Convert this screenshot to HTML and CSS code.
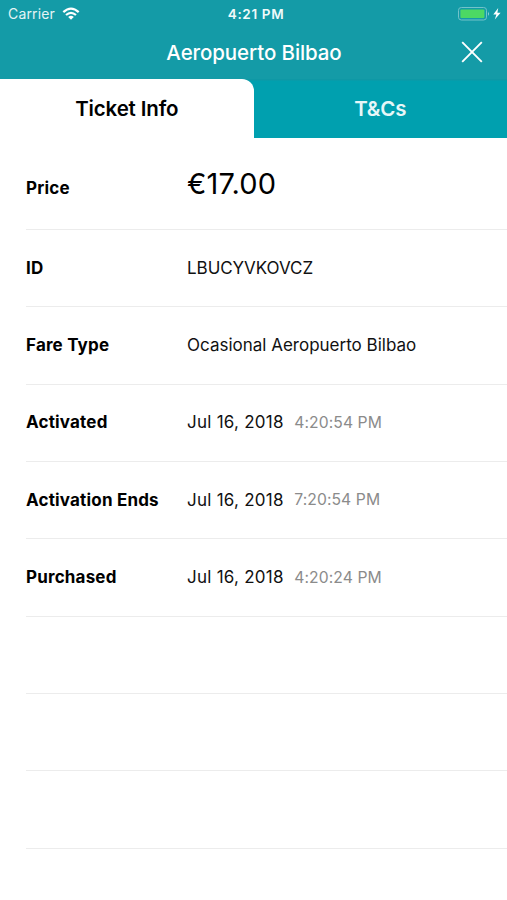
FILE: index.html
```html
<!DOCTYPE html>
<html lang="en">
<head>
<meta charset="utf-8">
<title>Aeropuerto Bilbao</title>
<link rel="stylesheet" href="styles.css">
</head>
<body>
<header class="header">
  <div class="status">
    <div class="carrier"><span>Carrier</span>
      <svg class="wifi" width="18" height="14" viewBox="0 0 18 14"><g fill="none" stroke="#fff" stroke-width="2.2"><path d="M1.3 5.1Q9-1.9 16.7 5.1"/><path d="M4 8Q9 3.6 14 8"/></g><path d="M6.2 10.1Q9 7.6 11.8 10.1L9 12.8Z" fill="#fff"/></svg>
    </div>
    <span class="time">4:21 PM</span>
    <svg class="battery" width="44" height="16" viewBox="0 0 44 16"><rect x=".5" y="1.5" width="28" height="12.5" rx="2.8" fill="none" stroke="#72c3ca"/><rect x="2.4" y="3.4" width="24" height="8.7" rx="1" fill="#4cd964"/><path d="M30 5.5q1.8 2.2 0 4.5z" fill="#a5d8dd"/><path d="M40.2 2L35.3 8.5h3.1L36.8 13.5 42.6 6.8h-3.2z" fill="#fff"/></svg>
  </div>
  <div class="nav">
    <h1 class="title">Aeropuerto Bilbao</h1>
    <svg class="close" width="22" height="22" viewBox="0 0 22 22"><path d="M1.2 1.2l19.6 19.6M20.8 1.2L1.2 20.8" stroke="#fff" stroke-width="1.9"/></svg>
  </div>
</header>
<nav class="tabs"><div class="tab active">Ticket Info</div><div class="tab">T&amp;Cs</div></nav>
<main class="rows">
  <div class="row first"><span class="label">Price</span><span class="price">€17.00</span></div>
  <div class="row"><span class="label">ID</span><span class="value code">LBUCYVKOVCZ</span></div>
  <div class="row"><span class="label">Fare Type</span><span class="value">Ocasional Aeropuerto Bilbao</span></div>
  <div class="row"><span class="label">Activated</span><span class="value date">Jul 16, 2018</span><span class="clock">4:20:54 PM</span></div>
  <div class="row"><span class="label">Activation Ends</span><span class="value date">Jul 16, 2018</span><span class="clock">7:20:54 PM</span></div>
  <div class="row"><span class="label">Purchased</span><span class="value date">Jul 16, 2018</span><span class="clock">4:20:24 PM</span></div>
  <div class="row"></div><div class="row"></div><div class="row"></div>
</main>
</body>
</html>
```
FILE: styles.css
```css
* { box-sizing: border-box; }
body { margin: 0; height: 900px; overflow: hidden; background: #fff; color: #000; font-family: Inter, "Liberation Sans", sans-serif; }
svg { display: block; }
.header { height: 79px; background: #149ba7; color: #fff; }
.status { height: 27px; display: grid; grid-template-columns: 1fr auto 1fr; align-items: center; padding: 0 5px 0 8px; }
.carrier { display: flex; align-items: center; gap: 7px; font-size: 14px; letter-spacing: .15px; color: #e4f4f5; }
.time { margin-left: 2px; font-size: 13.5px; font-weight: 600; letter-spacing: .65px; color: #effafa; }
.battery { justify-self: end; }
.nav { height: 50px; display: grid; grid-template-columns: 1fr auto 1fr; align-items: center; padding: 0 24px; }
.title { grid-column: 2; margin: 0; padding-left: 1px; font-size: 20.5px; font-weight: 540; letter-spacing: -.1px; }
.close { justify-self: end; }
.tabs { display: flex; height: 59px; background: linear-gradient(#0f98a5 1px, #00a0af 2px); }
.tab { flex: 1 1 0; display: flex; align-items: center; justify-content: center; color: #e6f7f8; font-size: 20.5px; font-weight: 570; letter-spacing: -.15px; }
.active { background: #fff; color: #000; border-top-right-radius: 12px; }
.rows { padding-left: 26px; }
.row { height: 77.35px; padding-bottom: .8px; border-bottom: 1px solid #ececec; display: flex; align-items: center; font-size: 17px; white-space: nowrap; }
.first { height: 92px; padding-top: 9px; padding-bottom: 0; }
.label { width: 161px; font-weight: 650; letter-spacing: .18px; }
.value { color: #111; }
.code { letter-spacing: -.05px; }
.date { letter-spacing: .25px; }
.price { font-size: 29px; letter-spacing: .2px; padding-bottom: 10px; }
.clock { margin-left: 10.5px; color: #8b8b8b; font-size: 15.7px; letter-spacing: .08px; }
```
